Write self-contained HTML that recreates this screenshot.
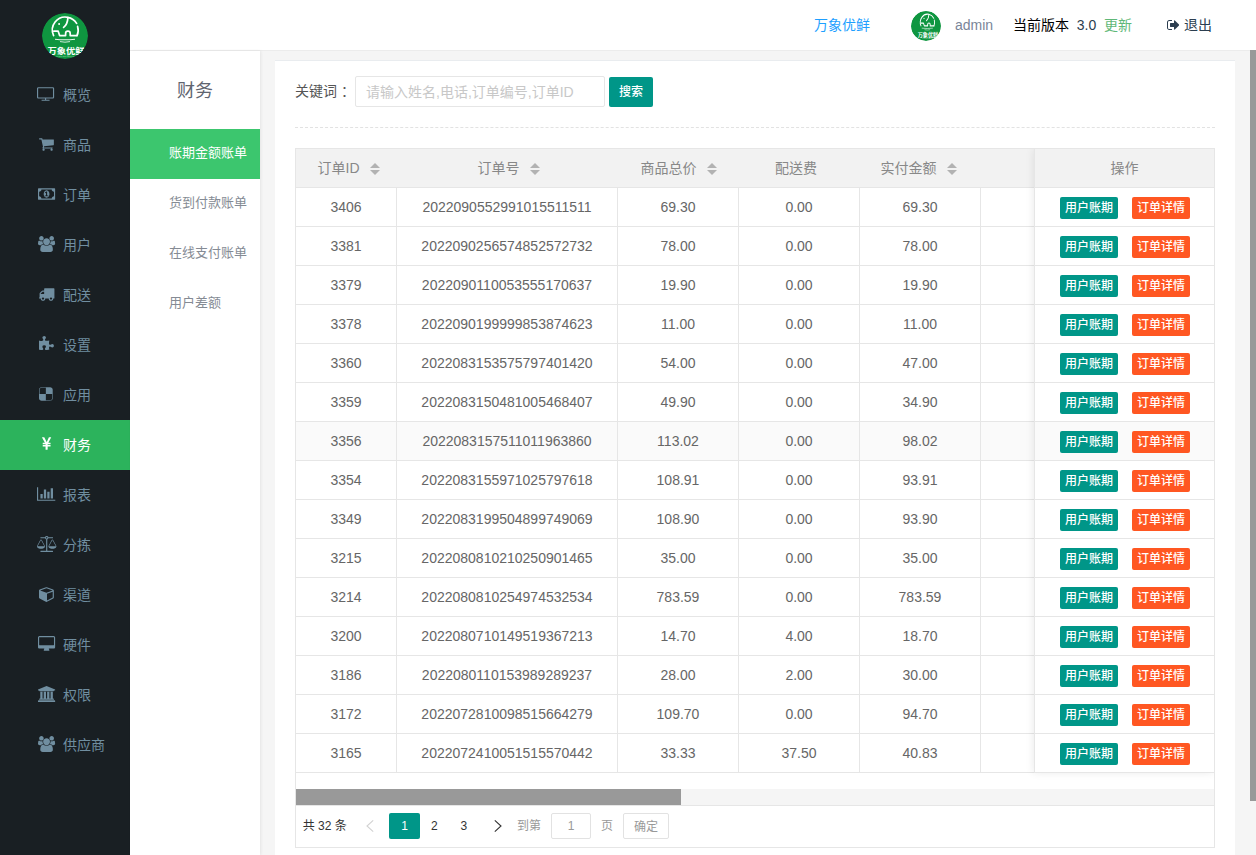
<!DOCTYPE html>
<html lang="zh-CN">
<head>
<meta charset="utf-8">
<title>财务 - 账期金额账单</title>
<style>
*{box-sizing:border-box;margin:0;padding:0}
html,body{width:1256px;height:855px;overflow:hidden}
body{position:relative;background:#f5f5f5;font-family:"Liberation Sans","Noto Sans CJK SC",sans-serif;font-size:14px;color:#333;-webkit-font-smoothing:antialiased}
a{text-decoration:none;color:inherit}
ul{list-style:none}

/* ---------- left dark nav ---------- */
.side{position:absolute;left:0;top:0;width:130px;height:855px;background:#191f23}
.logo{position:absolute;left:42px;top:13px;width:46px;height:46px;border-radius:50%;overflow:hidden}
.nav{position:absolute;left:0;top:70px;width:130px}
.nav li{position:relative;height:50px;line-height:50px;color:#708ea0;font-size:14px}
.nav li span{position:absolute;left:63px;top:0;white-space:nowrap}
.nav li svg{position:absolute;fill:#708ea0;overflow:visible}
.nav li.on{background:#2cb35c;color:#fff}
.nav li.on svg{fill:#fff}

/* ---------- top header ---------- */
.header{position:absolute;left:130px;top:0;width:1126px;height:51px;background:#fff;border-bottom:1px solid #ececec}
.header .it{position:absolute;top:0;height:50px;line-height:50px;font-size:14px;white-space:nowrap}
.avatar{position:absolute;left:781px;top:10.5px;width:30px;height:30px;border-radius:50%;overflow:hidden}

/* ---------- second level menu ---------- */
.sub{position:absolute;left:130px;top:51px;width:130px;height:804px;background:#fff;box-shadow:1px 0 3px rgba(0,0,0,.07)}
.sub h2{position:absolute;left:0;top:22px;width:130px;height:36px;line-height:36px;text-align:center;font-size:18px;font-weight:normal;color:#5f6570}
.sub ul{position:absolute;left:0;top:78px;width:130px}
.sub li{height:50px;line-height:47px;font-size:13px;color:#858b94;padding-left:39px;white-space:nowrap}
.sub li.on{background:#3cc66e;color:#fff}

/* ---------- main panel ---------- */
.panel{position:absolute;left:275px;top:60px;width:960px;height:795px;background:#fff;border-top:1px solid #e9ecef}
.kw{position:absolute;left:20px;top:14px;height:32px;line-height:32px;font-size:14px;color:#555}
.inp{position:absolute;left:80px;top:15px;width:250px;height:31px;border:1px solid #e6e6e6;border-radius:2px;background:#fff;line-height:30px;padding-left:10px;font-size:14px;color:#c8c8c8;white-space:nowrap}
.sbtn{font-weight:500;position:absolute;left:334px;top:16px;width:44px;height:30px;line-height:30px;border-radius:2px;background:#009688;color:#fff;font-size:12px;text-align:center}
.dash{position:absolute;left:20px;top:66px;width:920px;height:0;border-top:1px dashed #e2e2e2}

/* table */
.tbl{position:absolute;left:20px;top:87px;width:920px;height:700px;border:1px solid #e6e6e6;background:#fff;overflow:hidden}
.thead{position:absolute;left:0;top:0;width:918px;height:39px;background:#f2f2f2;border-bottom:1px solid #e6e6e6}
.thead div{position:absolute;top:0;height:38px;line-height:38px;text-align:center;color:#888;font-size:14px;white-space:nowrap}
.row{position:absolute;left:0;width:738px;height:39px;border-bottom:1px solid #e6e6e6}
.row div{position:absolute;top:0;height:38px;line-height:38px;text-align:center;color:#666;font-size:14px;border-right:1px solid #e6e6e6;white-space:nowrap}
.c1{left:0;width:101px}.c2{left:101px;width:221px}.c3{left:322px;width:121px}.c4{left:443px;width:121px}.c5{left:564px;width:121px}.c6{left:685px;width:60px}
.hov{background:#fafafa}
.thead .c1{left:0;width:100px}.thead .c2{left:100px;width:220px}.thead .c3{left:320px;width:120px}.thead .c4{left:440px;width:120px}.thead .c5{left:560px;width:120px}
.fix{position:absolute;left:738px;top:0;width:180px;height:624px;background:#fff;border-left:1px solid #e6e6e6;box-shadow:-1px 0 8px rgba(0,0,0,.08)}
.fix .fh{position:absolute;left:0;top:0;width:179px;height:39px;line-height:38px;text-align:center;background:#f2f2f2;color:#888;border-bottom:1px solid #e6e6e6}
.fix .fr{position:absolute;left:0;width:179px;height:39px;border-bottom:1px solid #e6e6e6}
.b{font-weight:500;position:absolute;top:9px;width:58px;height:22px;line-height:22px;border-radius:2px;color:#fff;font-size:12px;text-align:center;white-space:nowrap}
.b1{left:25px;background:#009688}.b2{left:97px;background:#ff5722}
.sort{display:inline-block;position:relative;width:10px;height:20px;margin-left:5px;vertical-align:middle}
.sort:before,.sort:after{content:"";position:absolute;left:5px;width:0;height:0;border-left:5px solid transparent;border-right:5px solid transparent}
.sort:before{top:4px;border-bottom:5px solid #b2b2b2}
.sort:after{top:11px;border-top:5px solid #b2b2b2}
.hbar{position:absolute;left:0;top:640px;width:918px;height:16px;background:#f5f5f5}
.hbar i{position:absolute;left:0;top:0;width:385px;height:16px;background:#999}
.pager{position:absolute;left:0;top:656px;width:918px;height:42px;border-top:1px solid #e6e6e6;font-size:12px;color:#333;background:#fff}
.pager .p{position:absolute;top:7px;height:26px;line-height:26px;white-space:nowrap;text-align:center}
.pager .cur{left:93.3px;width:30.7px;background:#009688;color:#fff;border-radius:2px}
.pager .box{border:1px solid #e2e2e2;border-radius:2px;color:#999;line-height:24px}
.pager svg{position:absolute;fill:none;stroke-width:1.1}
.vscroll{position:absolute;left:1250px;top:50px;width:6px;height:751px;background:#999}
</style>
</head>
<body>

<div class="side">
  <div class="logo"><svg viewBox="0 0 46 46" width="100%" height="100%" style="display:block">
<circle cx="23" cy="23" r="23" fill="#0f9640"/>
<g fill="none" stroke="#fff" stroke-width="1.7" stroke-linecap="round" stroke-linejoin="round">
<path d="M11.6 22.6 A13 13 0 0 1 25.8 4.3 A13 13 0 0 1 34.6 10.4"/>
<path d="M35.6 13.4 A13 13 0 0 1 35 22.6"/>
<path d="M11.8 18.2 H16.2 L17.6 22.6 H23.6 V20.4 A2.3 2.3 0 0 1 28.2 20.4 V22.6 H34.8"/>
<path d="M25.9 4.6 Q25.6 11.4 21.6 14.4"/>
</g>
<circle cx="17.1" cy="10.9" r="1" fill="#fff"/>
<path d="M13 26.2 Q23 27.4 33 26.2" fill="none" stroke="#fff" stroke-width="1.1" stroke-opacity=".9"/>
<path d="M18 28.6 Q23 29.8 28 28.6" fill="none" stroke="#fff" stroke-width="1" stroke-opacity=".8"/>
<text x="5.6" y="40.9" font-family="Liberation Sans,Noto Sans CJK SC,sans-serif" font-weight="bold" font-size="8.4" fill="#fff" textLength="37" lengthAdjust="spacingAndGlyphs">万象优鲜</text>
<text x="14" y="43.6" font-family="Liberation Sans,sans-serif" font-size="2.2" fill="#fff" fill-opacity=".55" textLength="18">WANXIANG YOUXIAN</text>
</svg></div>
  <ul class="nav">
    <li><svg viewBox="0 0 1920 1792" style="left:37.28px;top:15.7px;width:17.14px;height:16px"><path d="M1792 1248v-960q0-13-9.500-22.500t-22.500-9.500h-1600q-13 0-22.500 9.500t-9.500 22.500v960q0 13 9.500 22.500t22.500 9.500h1600q13 0 22.500-9.500t9.500-22.500zM1920 288v960q0 66-47 113t-113 47h-736v128h352q14 0 23 9t9 23v64q0 14-9 23t-23 9h-832q-14 0-23-9t-9-23v-64q0-14 9-23t23-9h352v-128h-736q-66 0-113-47t-47-113v-960q0-66 47-113t113-47h1600q66 0 113 47t47 113z"/></svg><span>概览</span></li>
    <li><svg viewBox="0 0 1664 1792" style="left:38.92px;top:15.7px;width:14.86px;height:16px"><path d="M640 1536q0 53-37.500 90.500t-90.500 37.500-90.500-37.500-37.500-90.500 37.500-90.500 90.500-37.500 90.500 37.500 37.500 90.500zM1536 1536q0 53-37.500 90.500t-90.500 37.500-90.500-37.500-37.500-90.500 37.500-90.500 90.500-37.500 90.500 37.500 37.500 90.500zM1664 448v512q0 24-16 42.500t-41 21.500l-1044 122q1 7 4.500 21.500t6 26.500 2.500 22q0 16-24 64h920q26 0 45 19t19 45-19 45-45 19h-1024q-26 0-45-19t-19-45q0-14 11-39.500t29.500-59.500 20.500-38l-177-823h-204q-26 0-45-19t-19-45 19-45 45-19h256q16 0 28.500 6.500t20 15.500 13 24.500 7.500 26.500 5.500 29.500 4.500 25.500h1201q26 0 45 19t19 45z"/></svg><span>商品</span></li>
    <li><svg viewBox="0 0 1920 1792" style="left:37.78px;top:15.7px;width:17.14px;height:16px"><path d="M768 1152h384v-96h-128v-448h-114l-148 137 77 80q42-37 55-57h2v288h-128v96zM1280 896q0 70-21 142t-59.500 134-101.500 101-138 39-138-39-101.500-101-59.500-134-21-142 21-142 59.500-134 101.500-101 138-39 138 39 101.500 101 59.500 134 21 142zM1792 1152v-512q-106 0-181-75t-75-181h-1152q0 106-75 181t-181 75v512q106 0 181 75t75 181h1152q0-106 75-181t181-75zM1920 320v1152q0 26-19 45t-45 19h-1792q-26 0-45-19t-19-45v-1152q0-26 19-45t45-19h1792q26 0 45 19t19 45z"/></svg><span>订单</span></li>
    <li><svg viewBox="0 0 1920 1792" style="left:37.78px;top:15.7px;width:17.14px;height:16px"><path d="M593 896q-162 5-265 128h-134q-82 0-138-40.500t-56-118.500q0-353 124-353 6 0 43.500 21t97.500 42.500 119 21.500q67 0 133-23-5 37-5 66 0 139 81 256zM1664 1533q0 120-73 189.500t-194 69.500h-874q-121 0-194-69.500t-73-189.500q0-53 3.500-103.500t14-109 26.500-108.500 43-97.500 62-81 85.500-53.500 111.500-20q10 0 43 21.500t73 48 107 48 135 21.500 135-21.500 107-48 73-48 43-21.500q61 0 111.500 20t85.500 53.500 62 81 43 97.500 26.500 108.500 14 109 3.500 103.500zM640 256q0 106-75 181t-181 75-181-75-75-181 75-181 181-75 181 75 75 181zM1344 640q0 159-112.500 271.500t-271.500 112.500-271.500-112.500-112.500-271.500 112.500-271.500 271.500-112.500 271.500 112.500 112.500 271.500zM1920 865q0 78-56 118.500t-138 40.500h-134q-103-123-265-128 81-117 81-256 0-29-5-66 66 23 133 23 59 0 119-21.500t97.500-42.500 43.500-21q124 0 124 353zM1792 256q0 106-75 181t-181 75-181-75-75-181 75-181 181-75 181 75 75 181z"/></svg><span>用户</span></li>
    <li><svg viewBox="64 0 1728 1792" style="left:38.64px;top:15.7px;width:15.43px;height:16px"><path d="M640 1408q0-52-38-90t-90-38-90 38-38 90 38 90 90 38 90-38 38-90zM256 896h384v-256h-158q-13 0-22 9l-195 195q-9 9-9 22v30zM1536 1408q0-52-38-90t-90-38-90 38-38 90 38 90 90 38 90-38 38-90zM1792 320v1024q0 15-4 26.500t-13.500 18.500-16.500 11.500-23.500 6-22.500 2-25.500 0-22.500-.5q0 106-75 181t-181 75-181-75-75-181h-384q0 106-75 181t-181 75-181-75-75-181h-64q-3 0-22.500.5t-25.500 0-22.500-2-23.500-6-16.500-11.500-13.500-18.500-4-26.500q0-26 19-45t45-19v-320q0-8-.5-35t0-38 2.500-34.500 6.500-37 14-30.500 22.500-30l198-198q19-19 50.500-32t58.500-13h160v-192q0-26 19-45t45-19h1024q26 0 45 19t19 45z"/></svg><span>配送</span></li>
    <li><svg viewBox="0 0 1664 1792" style="left:38.92px;top:15.7px;width:14.86px;height:16px"><path d="M1664 1098q0 81-44.500 135t-123.500 54q-41 0-77.500-17.500t-59-38-56.500-38-71-17.500q-110 0-110 124 0 39 16 115t15 115v5q-22 0-33 1-34 3-97.500 11.500t-115.500 13.500-98 5q-61 0-103-26.500t-42-83.500q0-37 17.500-71t38-56.500 38-59 17.500-77.500q0-79-54-123.500t-135-44.500q-84 0-143 45.500t-59 127.500q0 43 15 83t33.500 64.500 33.500 53 15 50.500q0 45-46 89-37 35-117 35-95 0-245-24-9-2-27.500-4t-27.500-4l-13-2q-1 0-3-1-2 0-2-1v-1024q2 1 17.500 3.500t34 5 21.500 3.500q150 24 245 24 80 0 117-35 46-44 46-89 0-22-15-50.500t-33.500-53-33.500-64.500-15-83q0-82 59-127.500t144-45.500q80 0 134 44.500t54 123.500q0 41-17.500 77.500t-38 59-38 56.500-17.500 71q0 57 42 83.500t103 26.500q64 0 180-15t163-17v2q-1 2-3.500 17.500t-5 34-3.500 21.500q-24 150-24 245 0 80 35 117 44 46 89 46 22 0 50.500-15t53-33.500 64.500-33.500 83-15q82 0 127.500 59t45.500 143z"/></svg><span>设置</span></li>
    <li><svg viewBox="128 0 1536 1792" style="left:39.49px;top:15.7px;width:13.71px;height:16px"><path d="M1600 1376v-480h-704v-704h-480q-93 0-158.500 65.500t-65.500 158.500v480h704v704h480q93 0 158.500-65.500t65.500-158.500zM1664 416v960q0 119-84.500 203.500t-203.500 84.500h-960q-119 0-203.500-84.500t-84.500-203.500v-960q0-119 84.500-203.500t203.500-84.500h960q119 0 203.500 84.500t84.500 203.500z"/></svg><span>应用</span></li>
    <li class="on"><svg viewBox="382.5 0 1026.8 1792" style="left:41.77px;top:15.7px;width:9.17px;height:16px"><path d="M985.500 1536h-172q-13 0-22.500-9t-9.500-23v-330h-288q-13 0-22.500-9t-9.500-23v-103q0-13 9.500-22.500t22.500-9.500h288v-85h-288q-13 0-22.500-9t-9.500-23v-104q0-13 9.500-22.500t22.500-9.500h214l-321-578q-8-16 0-32 10-16 28-16h194q19 0 29 18l215 425q19 38 56 125 10-24 30.500-68t27.500-61l191-420q8-19 29-19h191q17 0 27 16 9 14 1 31l-313 579h215q13 0 22.500 9.500t9.500 22.500v104q0 14-9.500 23t-22.500 9h-290v85h290q13 0 22.500 9.500t9.500 22.500v103q0 14-9.500 23t-22.500 9h-290v330q0 13-9.500 22.500t-22.500 9.500z"/></svg><span>财务</span></li>
    <li><svg viewBox="0 0 2048 1792" style="left:37.21px;top:15.7px;width:18.29px;height:16px"><path d="M640 896v512h-256v-512h256zM1024 384v1024h-256v-1024h256zM2048 1536v128h-2048v-1536h128v1408h1920zM1408 640v768h-256v-768h256zM1792 256v1152h-256v-1152h256z"/></svg><span>报表</span></li>
    <li><svg viewBox="0 0 2176 1792" style="left:36.64px;top:15.7px;width:19.43px;height:16px"><path d="M1728 448l-384 704h768zM448 448l-384 704h768zM1269 256q-14 40-45.500 71.500t-71.500 45.500v1291h608q14 0 23 9t9 23v64q0 14-9 23t-23 9h-1344q-14 0-23-9t-9-23v-64q0-14 9-23t23-9h608v-1291q-40-14-71.500-45.500t-45.500-71.500h-491q-14 0-23-9t-9-23v-64q0-14 9-23t23-9h491q21-57 70-92.500t111-35.500 111 35.500 70 92.500h491q14 0 23 9t9 23v64q0 14-9 23t-23 9h-491zM1088 272q33 0 56.500-23.500t23.500-56.500-23.500-56.500-56.500-23.500-56.500 23.500-23.500 56.500 23.500 56.500 56.500 23.500zM2176 1152q0 73-46.500 131t-117.500 91-144.500 49.500-139.500 16.500-139.500-16.500-144.500-49.500-117.500-91-46.500-131q0-11 35-81t92-174.500 107-195.500 102-184 56-100q18-33 56-33t56 33q4 7 56 100t102 184 107 195.500 92 174.500 35 81zM896 1152q0 73-46.500 131t-117.500 91-144.500 49.500-139.500 16.500-139.500-16.500-144.500-49.500-117.500-91-46.500-131q0-11 35-81t92-174.500 107-195.500 102-184 56-100q18-33 56-33t56 33q4 7 56 100t102 184 107 195.500 92 174.500 35 81z"/></svg><span>分拣</span></li>
    <li><svg viewBox="0 0 1664 1792" style="left:38.92px;top:15.7px;width:14.86px;height:16px"><path d="M896 1629l640-349v-636l-640 233v752zM832 764l698-254-698-254-698 254zM1664 512v768q0 35-18 65t-49 47l-704 384q-28 16-61 16t-61-16l-704-384q-31-17-49-47t-18-65v-768q0-40 23-73t61-47l704-256q22-8 44-8t44 8l704 256q38 14 61 47t23 73z"/></svg><span>渠道</span></li>
    <li><svg viewBox="-64 0 1920 1792" style="left:37.78px;top:15.7px;width:17.14px;height:16px"><path d="M1728 992v-832q0-13-9.500-22.500t-22.500-9.500h-1600q-13 0-22.500 9.500t-9.500 22.500v832q0 13 9.500 22.500t22.500 9.500h1600q13 0 22.500-9.500t9.500-22.500zM1856 160v1088q0 66-47 113t-113 47h-544q0 37 16 77.500t32 71 16 43.500q0 26-19 45t-45 19h-512q-26 0-45-19t-19-45q0-14 16-44t32-70 16-78h-544q-66 0-113-47t-47-113v-1088q0-66 47-113t113-47h1600q66 0 113 47t47 113z"/></svg><span>硬件</span></li>
    <li><svg viewBox="0 0 1920 1792" style="left:37.78px;top:15.7px;width:17.14px;height:16px"><path d="M960 0l960 384v128h-128q0 26-20.500 45t-48.500 19h-1526q-28 0-48.500-19t-20.500-45h-128v-128zM256 640h256v768h128v-768h256v768h128v-768h256v768h128v-768h256v768h59q28 0 48.500 19t20.500 45v64h-1664v-64q0-26 20.500-45t48.500-19h59v-768zM1851 1600q28 0 48.500 19t20.500 45v128h-1920v-128q0-26 20.500-45t48.500-19h1782z"/></svg><span>权限</span></li>
    <li><svg viewBox="0 0 1920 1792" style="left:37.78px;top:15.7px;width:17.14px;height:16px"><path d="M593 896q-162 5-265 128h-134q-82 0-138-40.500t-56-118.500q0-353 124-353 6 0 43.500 21t97.500 42.500 119 21.500q67 0 133-23-5 37-5 66 0 139 81 256zM1664 1533q0 120-73 189.500t-194 69.500h-874q-121 0-194-69.500t-73-189.500q0-53 3.500-103.500t14-109 26.500-108.500 43-97.500 62-81 85.500-53.500 111.500-20q10 0 43 21.500t73 48 107 48 135 21.500 135-21.500 107-48 73-48 43-21.500q61 0 111.500 20t85.500 53.500 62 81 43 97.500 26.500 108.500 14 109 3.500 103.500zM640 256q0 106-75 181t-181 75-181-75-75-181 75-181 181-75 181 75 75 181zM1344 640q0 159-112.500 271.500t-271.500 112.500-271.500-112.500-112.500-271.500 112.500-271.500 271.500-112.500 271.500 112.500 112.500 271.500zM1920 865q0 78-56 118.500t-138 40.500h-134q-103-123-265-128 81-117 81-256 0-29-5-66 66 23 133 23 59 0 119-21.500t97.500-42.500 43.500-21q124 0 124 353zM1792 256q0 106-75 181t-181 75-181-75-75-181 75-181 181-75 181 75 75 181z"/></svg><span>供应商</span></li>
  </ul>
</div>

<div class="header">
  <a class="it" style="left:684px;color:#1e9fff">万象优鲜</a>
  <div class="avatar"><svg viewBox="0 0 46 46" width="100%" height="100%" style="display:block">
<circle cx="23" cy="23" r="23" fill="#0f9640"/>
<g transform="translate(25 23.2) scale(.852 .968) translate(-23 -23)">
<g fill="none" stroke="#fff" stroke-width="1.7" stroke-linecap="round" stroke-linejoin="round">
<path d="M11.6 22.6 A13 13 0 0 1 25.8 4.3 A13 13 0 0 1 34.6 10.4"/>
<path d="M35.6 13.4 A13 13 0 0 1 35 22.6"/>
<path d="M11.8 18.2 H16.2 L17.6 22.6 H23.6 V20.4 A2.3 2.3 0 0 1 28.2 20.4 V22.6 H34.8"/>
<path d="M25.9 4.6 Q25.6 11.4 21.6 14.4"/>
</g>
<circle cx="17.1" cy="10.9" r="1" fill="#fff"/>
<path d="M13 26.2 Q23 27.4 33 26.2" fill="none" stroke="#fff" stroke-width="1.1" stroke-opacity=".9"/>
<path d="M18 28.6 Q23 29.8 28 28.6" fill="none" stroke="#fff" stroke-width="1" stroke-opacity=".8"/>
<text x="5.6" y="40.9" font-family="Liberation Sans,Noto Sans CJK SC,sans-serif" font-weight="bold" font-size="8.4" fill="#fff" textLength="37" lengthAdjust="spacingAndGlyphs">万象优鲜</text>
<text x="14" y="43.6" font-family="Liberation Sans,sans-serif" font-size="2.2" fill="#fff" fill-opacity=".55" textLength="18">WANXIANG YOUXIAN</text>
</g>
</svg></div>
  <span class="it" style="left:825px;color:#7a8599">admin</span>
  <span class="it" style="left:883px;color:#000">当前版本&nbsp; <span style="color:#2c3e50">3.0</span></span>
  <a class="it" style="left:974px;color:#5fb878">更新</a>
  <svg viewBox="64 0 1568 1792" style="position:absolute;left:1036.5px;top:17.5px;width:12.25px;height:14px;fill:#2c3e50"><path d="M704 1440q0 4 1 20t.5 26.500-3 23.500-10 19.500-20.500 6.500h-320q-119 0-203.500-84.500t-84.500-203.500v-704q0-119 84.500-203.500t203.500-84.500h320q13 0 22.500 9.500t9.500 22.500q0 4 1 20t.5 26.500-3 23.500-10 19.500-20.500 6.500h-320q-66 0-113 47t-47 113v704q0 66 47 113t113 47h312l11.500 1 11.500 3 8 5.500 7 9 2 13.500zM1632 896q0 26-19 45l-544 544q-19 19-45 19t-45-19-19-45v-288h-448q-26 0-45-19t-19-45v-384q0-26 19-45t45-19h448v-288q0-26 19-45t45-19 45 19l544 544q19 19 19 45z"/></svg><a class="it" style="left:1054px;color:#2c3e50">退出</a>
</div>

<div class="sub">
  <h2>财务</h2>
  <ul>
    <li class="on">账期金额账单</li>
    <li>货到付款账单</li>
    <li>在线支付账单</li>
    <li>用户差额</li>
  </ul>
</div>

<div class="panel">
  <div class="kw">关键词<span style="position:relative;left:4px">：</span></div>
  <div class="inp">请输入姓名,电话,订单编号,订单ID</div>
  <div class="sbtn">搜索</div>
  <div class="dash"></div>

  <div class="tbl" id="tbl">
    <div class="thead">
      <div class="c1">订单ID<i class="sort"></i></div>
      <div class="c2">订单号<i class="sort"></i></div>
      <div class="c3">商品总价<i class="sort"></i></div>
      <div class="c4">配送费</div>
      <div class="c5">实付金额<i class="sort"></i></div>
    </div>
    <div class="row" style="top:39px"><div class="c1">3406</div><div class="c2">2022090552991015511511</div><div class="c3">69.30</div><div class="c4">0.00</div><div class="c5">69.30</div><div class="c6"></div></div>
    <div class="row" style="top:78px"><div class="c1">3381</div><div class="c2">2022090256574852572732</div><div class="c3">78.00</div><div class="c4">0.00</div><div class="c5">78.00</div><div class="c6"></div></div>
    <div class="row" style="top:117px"><div class="c1">3379</div><div class="c2">2022090110053555170637</div><div class="c3">19.90</div><div class="c4">0.00</div><div class="c5">19.90</div><div class="c6"></div></div>
    <div class="row" style="top:156px"><div class="c1">3378</div><div class="c2">2022090199999853874623</div><div class="c3">11.00</div><div class="c4">0.00</div><div class="c5">11.00</div><div class="c6"></div></div>
    <div class="row" style="top:195px"><div class="c1">3360</div><div class="c2">2022083153575797401420</div><div class="c3">54.00</div><div class="c4">0.00</div><div class="c5">47.00</div><div class="c6"></div></div>
    <div class="row" style="top:234px"><div class="c1">3359</div><div class="c2">2022083150481005468407</div><div class="c3">49.90</div><div class="c4">0.00</div><div class="c5">34.90</div><div class="c6"></div></div>
    <div class="row hov" style="top:273px"><div class="c1">3356</div><div class="c2">2022083157511011963860</div><div class="c3">113.02</div><div class="c4">0.00</div><div class="c5">98.02</div><div class="c6"></div></div>
    <div class="row" style="top:312px"><div class="c1">3354</div><div class="c2">2022083155971025797618</div><div class="c3">108.91</div><div class="c4">0.00</div><div class="c5">93.91</div><div class="c6"></div></div>
    <div class="row" style="top:351px"><div class="c1">3349</div><div class="c2">2022083199504899749069</div><div class="c3">108.90</div><div class="c4">0.00</div><div class="c5">93.90</div><div class="c6"></div></div>
    <div class="row" style="top:390px"><div class="c1">3215</div><div class="c2">2022080810210250901465</div><div class="c3">35.00</div><div class="c4">0.00</div><div class="c5">35.00</div><div class="c6"></div></div>
    <div class="row" style="top:429px"><div class="c1">3214</div><div class="c2">2022080810254974532534</div><div class="c3">783.59</div><div class="c4">0.00</div><div class="c5">783.59</div><div class="c6"></div></div>
    <div class="row" style="top:468px"><div class="c1">3200</div><div class="c2">2022080710149519367213</div><div class="c3">14.70</div><div class="c4">4.00</div><div class="c5">18.70</div><div class="c6"></div></div>
    <div class="row" style="top:507px"><div class="c1">3186</div><div class="c2">2022080110153989289237</div><div class="c3">28.00</div><div class="c4">2.00</div><div class="c5">30.00</div><div class="c6"></div></div>
    <div class="row" style="top:546px"><div class="c1">3172</div><div class="c2">2022072810098515664279</div><div class="c3">109.70</div><div class="c4">0.00</div><div class="c5">94.70</div><div class="c6"></div></div>
    <div class="row" style="top:585px"><div class="c1">3165</div><div class="c2">2022072410051515570442</div><div class="c3">33.33</div><div class="c4">37.50</div><div class="c5">40.83</div><div class="c6"></div></div>
    <div class="fix">
      <div class="fh">操作</div>
      <div class="fr" style="top:39px"><a class="b b1">用户账期</a><a class="b b2">订单详情</a></div>
      <div class="fr" style="top:78px"><a class="b b1">用户账期</a><a class="b b2">订单详情</a></div>
      <div class="fr" style="top:117px"><a class="b b1">用户账期</a><a class="b b2">订单详情</a></div>
      <div class="fr" style="top:156px"><a class="b b1">用户账期</a><a class="b b2">订单详情</a></div>
      <div class="fr" style="top:195px"><a class="b b1">用户账期</a><a class="b b2">订单详情</a></div>
      <div class="fr" style="top:234px"><a class="b b1">用户账期</a><a class="b b2">订单详情</a></div>
      <div class="fr hov" style="top:273px"><a class="b b1">用户账期</a><a class="b b2">订单详情</a></div>
      <div class="fr" style="top:312px"><a class="b b1">用户账期</a><a class="b b2">订单详情</a></div>
      <div class="fr" style="top:351px"><a class="b b1">用户账期</a><a class="b b2">订单详情</a></div>
      <div class="fr" style="top:390px"><a class="b b1">用户账期</a><a class="b b2">订单详情</a></div>
      <div class="fr" style="top:429px"><a class="b b1">用户账期</a><a class="b b2">订单详情</a></div>
      <div class="fr" style="top:468px"><a class="b b1">用户账期</a><a class="b b2">订单详情</a></div>
      <div class="fr" style="top:507px"><a class="b b1">用户账期</a><a class="b b2">订单详情</a></div>
      <div class="fr" style="top:546px"><a class="b b1">用户账期</a><a class="b b2">订单详情</a></div>
      <div class="fr" style="top:585px"><a class="b b1">用户账期</a><a class="b b2">订单详情</a></div>
    </div>
    <div class="hbar"><i></i></div>
    <div class="pager">
      <span class="p" style="left:6.7px">共 32 条</span>
      <svg viewBox="0 0 8 12" style="left:70px;top:14px;width:8px;height:12px;stroke:#d2d2d2"><path d="M7.2 0.4 L1 6 L7.2 11.6"/></svg>
      <span class="p cur">1</span>
      <span class="p" style="left:123px;width:30.7px">2</span>
      <span class="p" style="left:152.6px;width:30.7px">3</span>
      <svg viewBox="0 0 8 12" style="left:198px;top:14px;width:8px;height:12px;stroke:#333"><path d="M0.8 0.4 L7 6 L0.8 11.6"/></svg>
      <span class="p" style="left:221px;color:#999">到第</span>
      <span class="p box" style="left:255px;width:40px">1</span>
      <span class="p" style="left:305px;color:#999">页</span>
      <span class="p box" style="left:327px;width:46px;padding-top:1px">确定</span>
    </div>
  </div>
</div>

<div class="vscroll"></div>
</body>
</html>
